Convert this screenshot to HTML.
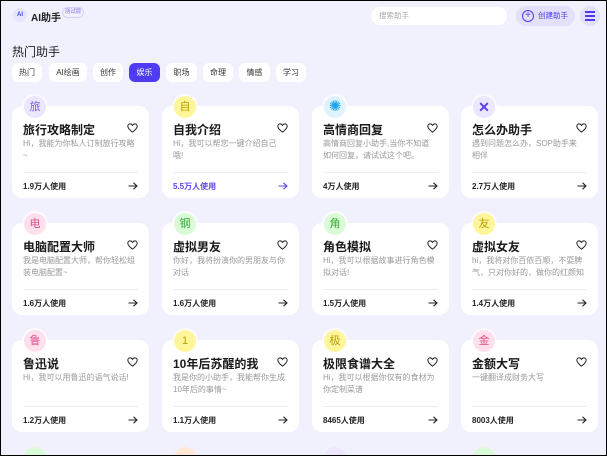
<!DOCTYPE html>
<html><head><meta charset="utf-8"><style>
*{box-sizing:border-box;margin:0;padding:0}
body{width:607px;height:456px;overflow:hidden;font-family:"Liberation Sans","Noto Sans CJK SC",sans-serif;background:#000}
.win{position:absolute;left:1px;top:1px;width:605px;height:454px;background:#f1f1fd;overflow:hidden}
.abs{position:absolute}
.tab{position:absolute;top:62px;height:19px;background:#fff;border-radius:6px;font-size:8px;color:#333;text-align:center;line-height:19px}
.tab.on{background:#4f3cf2;color:#fff}
.card{position:absolute;width:137px;height:92px;background:#fff;border-radius:10px}
.ic{position:absolute;left:12px;top:-10px;width:22px;height:22px;border-radius:50%;text-align:center;line-height:22px;font-size:11px;box-shadow:0 0 0 2px rgba(255,255,255,.7)}
.t{position:absolute;left:11px;top:15px;font-size:12px;font-weight:bold;color:#1a1a1a;white-space:nowrap}
.hrt{position:absolute;right:11px;top:17px}
.d{position:absolute;left:11px;top:32px;width:112px;font-size:8px;line-height:12px;color:#999;height:24px;overflow:hidden}
.ln{position:absolute;left:11px;right:11px;top:66px;border-top:1px solid #eee}
.u{position:absolute;left:11px;top:75px;font-size:8px;font-weight:bold;color:#222}
.ar{position:absolute;right:11px;top:76px}
</style></head><body><div class="win">
<div class="abs" style="left:12px;top:7px;width:14px;height:14px;border-radius:50%;background:#e4e6ff;font-size:6px;font-weight:bold;color:#3a4ae0;text-align:center;line-height:14px">AI</div>
<div class="abs" style="left:30px;top:8px;font-size:10px;font-weight:bold;color:#222">AI助手</div>
<div class="abs" style="left:61px;top:6px;width:22px;height:11px;border:1px solid #d6d0f5;border-radius:6px;font-size:5.5px;color:#8a78e8;text-align:center;line-height:9px">测试版</div>
<div class="abs" style="left:370px;top:6px;width:136px;height:18px;background:#fff;border-radius:9px;font-size:7.5px;color:#aaa;padding-left:8px;line-height:18px">搜索助手</div>
<div class="abs" style="left:515px;top:5px;width:59px;height:20px;background:#e2e0fb;border-radius:10px;font-size:7.5px;color:#4f3cf2;line-height:20px;padding-left:22px">创建助手</div>
<div class="abs" style="left:521px;top:9px;width:12px;height:12px;border:1.3px solid #4f3cf2;border-radius:50%;color:#4f3cf2;font-size:10px;line-height:9px;text-align:center">+</div>
<div class="abs" style="left:579px;top:5px;width:20px;height:20px;background:#e2e0fb;border-radius:50%"></div>
<div class="abs" style="left:584px;top:10px;width:10px;height:10px;border-top:2px solid #4f3cf2;border-bottom:2px solid #4f3cf2"></div>
<div class="abs" style="left:584px;top:14px;width:10px;height:2px;background:#4f3cf2"></div>
<div class="abs" style="left:11px;top:42px;font-size:12px;color:#222">热门助手</div>
<div class="tab" style="left:11px;width:30px">热门</div>
<div class="tab" style="left:48px;width:38px">AI绘画</div>
<div class="tab" style="left:92px;width:30px">创作</div>
<div class="tab on" style="left:128px;width:31px">娱乐</div>
<div class="tab" style="left:165px;width:31px">职场</div>
<div class="tab" style="left:202px;width:30px">命理</div>
<div class="tab" style="left:238px;width:31px">情感</div>
<div class="tab" style="left:275px;width:30px">学习</div>
<div id="g"></div>
</div>
<script>
var H='<svg class="hrt" width="11" height="10" viewBox="0 0 20 18"><path d="M10 16.5C4 12 1.5 9 1.5 5.5 1.5 3 3.5 1.5 5.7 1.5 7.7 1.5 9 2.7 10 4.2 11 2.7 12.3 1.5 14.3 1.5 16.5 1.5 18.5 3 18.5 5.5 18.5 9 16 12 10 16.5Z" fill="none" stroke="#222" stroke-width="1.8"/></svg>';
function A(c){return '<svg class="ar" width="10" height="8" viewBox="0 0 10 8"><path d="M0.5 4H9M5.5 0.8L9 4 5.5 7.2" fill="none" stroke="'+c+'" stroke-width="1.1"/></svg>';}
var D=[
["旅","#ece6ff","#7a5ce6","旅行攻略制定","Hi，我能为你私人订制旅行攻略~","1.9万人使用"],
["自","#fff59a","#b8a000","自我介绍","Hi，我可以帮您一键介绍自己哦!","5.5万人使用",1],
["✺","#dff3ff","#1aa3f0","高情商回复","高情商回复小助手,当你不知道如何回复，请试试这个吧。","4万人使用"],
["✕","#ece6ff","#5a3de8","怎么办助手","遇到问题怎么办，SOP助手来相伴","2.7万人使用"],
["电","#ffe0ec","#e2508a","电脑配置大师","我是电脑配置大师，帮你轻松组装电脑配置~","1.6万人使用"],
["钢","#d9fbd6","#3aa83a","虚拟男友","你好，我将扮演你的男朋友与你对话","1.6万人使用"],
["角","#d9fbd6","#3aa83a","角色模拟","Hi，我可以根据故事进行角色模拟对话!","1.5万人使用"],
["友","#fff59a","#b8a000","虚拟女友","hi，我将对你百依百顺，不耍脾气，只对你好的，做你的红颜知己","1.4万人使用"],
["鲁","#ffe0ec","#e2508a","鲁迅说","Hi，我可以用鲁迅的语气说话!","1.2万人使用"],
["1","#fff59a","#b8a000","10年后苏醒的我","我是你的小助手，我能帮你生成10年后的事情~","1.1万人使用"],
["极","#fff59a","#b8a000","极限食谱大全","Hi，我可以根据你仅有的食材为你定制菜谱","8465人使用"],
["金","#ffe0ec","#e2508a","金额大写","一键翻译成财务大写","8003人使用"]];
var X=[11,161,311,460],Y=[105,222,339],h='';
D.forEach(function(d,i){var x=X[i%4],y=Y[Math.floor(i/4)];var c=d[6]?'#5a45f0':'#222';
var ics=d[0]=='✺'?'font-size:15px;':(d[0]=='✕'?'font-size:14px;font-weight:bold;':'');
h+='<div class="card" style="left:'+x+'px;top:'+y+'px"><div class="ic" style="background:'+d[1]+';color:'+d[2]+';'+ics+'">'+d[0]+'</div><div class="t">'+d[3]+'</div>'+H+'<div class="d">'+d[4]+'</div><div class="ln"></div><div class="u" style="color:'+c+'">'+d[5]+'</div>'+A(c)+'</div>';});
["#d9fbd6","#ffe8d6","#ece6ff","#d9fbd6"].forEach(function(c,i){h+='<div class="abs" style="left:'+(X[i]+12)+'px;top:446px;width:22px;height:22px;border-radius:50%;background:'+c+'"></div>';});
document.getElementById('g').innerHTML=h;
</script></body></html>
